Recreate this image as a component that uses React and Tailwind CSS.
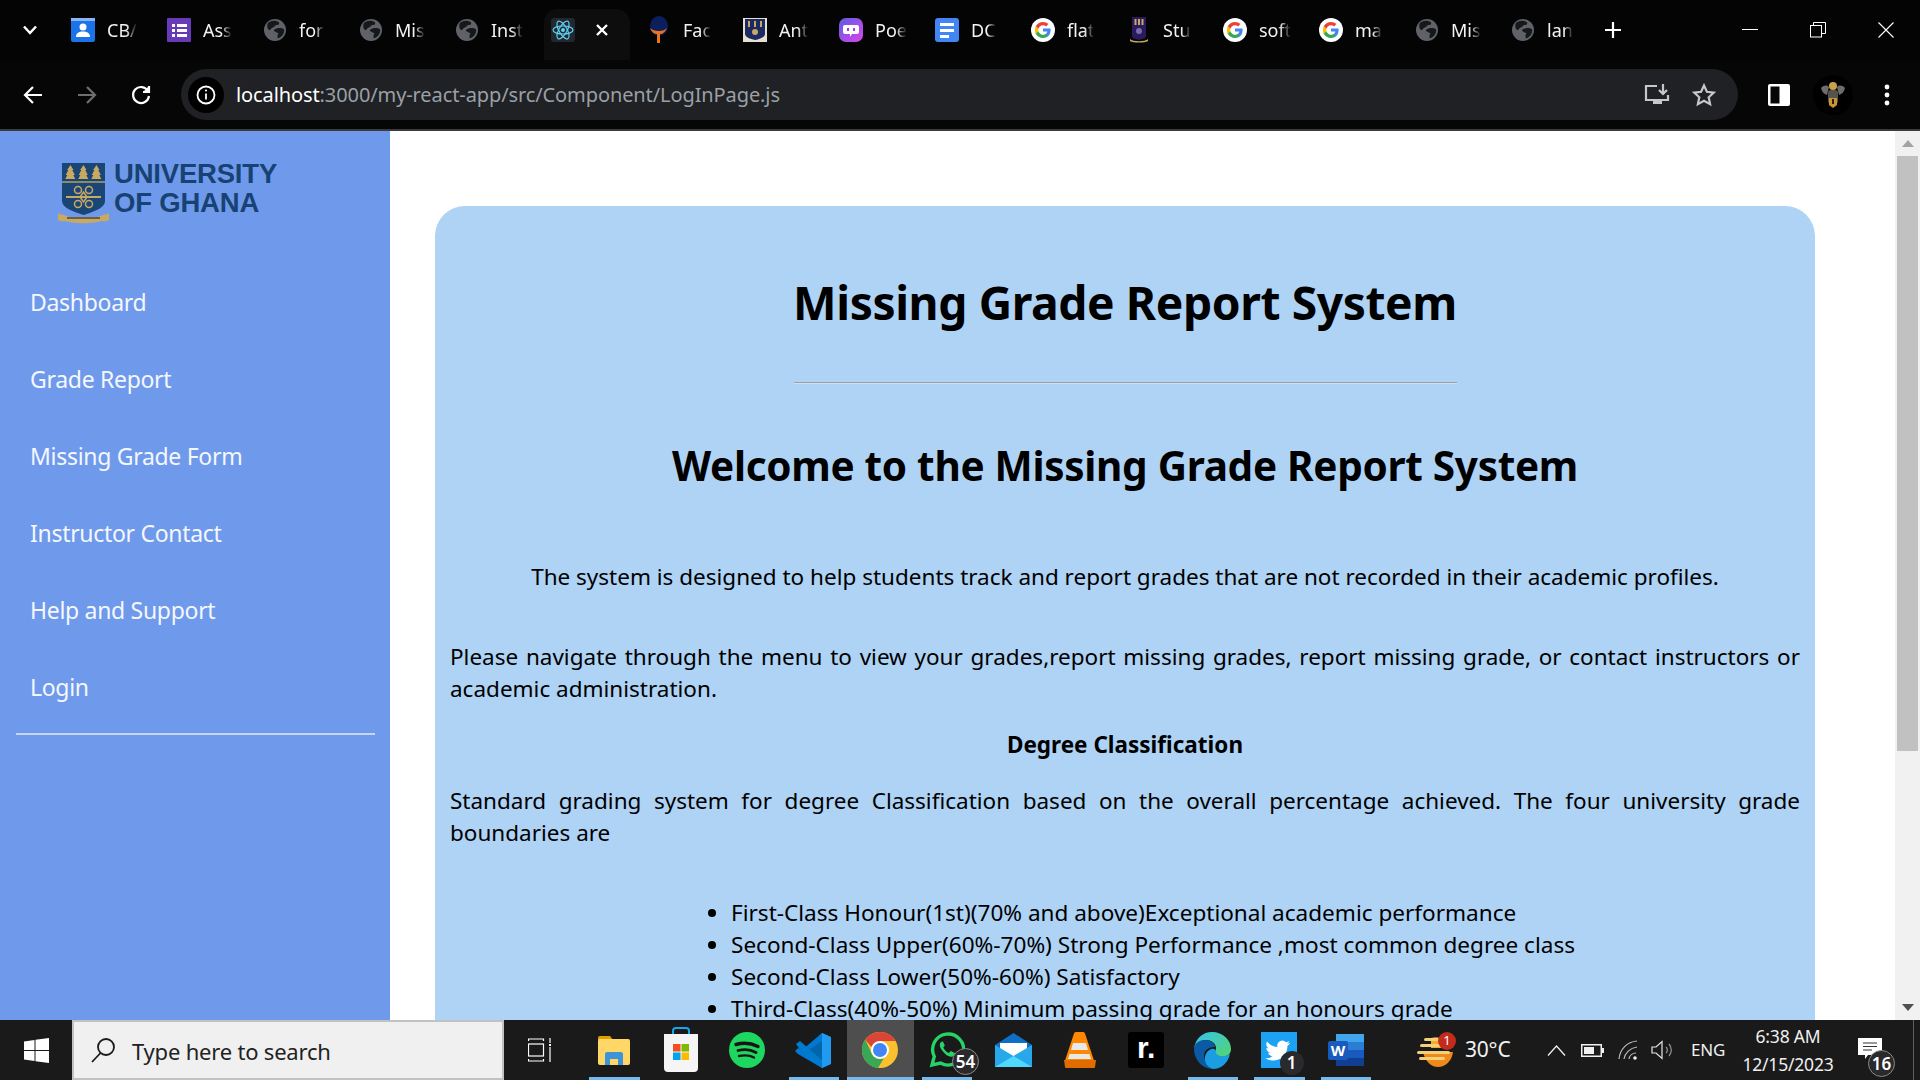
import React from "react";

const Globe = () => (
  <svg width="24" height="24" viewBox="0 0 24 24">
    <circle cx="12" cy="12" r="11" fill="#5f6368" />
    <path d="M4 6c3-3 8-4 11-2 1 2-1 3-3 3-1 3-4 3-5 6-2 0-4-3-3-7zM21 10c1 4-1 8-5 10-1-2-1-4 0-5-2-1-5-1-5-3 3-3 7-3 10-2z" fill="#17181a" transform="rotate(8 12 12)" />
  </svg>
);
const GIcon = () => (
  <svg width="24" height="24" viewBox="0 0 24 24">
    <circle cx="12" cy="12" r="12" fill="#fff" />
    <path d="M19.6 12.2c0-.6 0-1.1-.1-1.6H12v3h4.3c-.2 1-.8 1.9-1.6 2.4v2h2.6c1.5-1.4 2.3-3.4 2.3-5.8z" fill="#4285f4" />
    <path d="M12 20c2.2 0 4-.7 5.3-1.9l-2.6-2c-.7.5-1.6.8-2.7.8-2.1 0-3.9-1.4-4.5-3.3H4.8v2.1C6.1 18.300 8.800 20 12 20z" fill="#34a853" />
    <path d="M7.500 13.600c-.3-1-.3-2.200 0-3.200V8.300H4.800c-1.100 2.200-1.100 5.200 0 7.400z" fill="#fbbc05" />
    <path d="M12 7.200c1.200 0 2.300.4 3.100 1.200l2.300-2.300C16 4.800 14.200 4 12 4 8.800 4 6.100 5.700 4.800 8.300l2.700 2.100C8.100 8.600 9.900 7.200 12 7.200z" fill="#ea4335" />
  </svg>
);
const React1 = () => (
  <svg width="24" height="24" viewBox="0 0 24 24" fill="none" stroke="#5ed3f3" strokeWidth="1.200">
    <rect width="24" height="24" rx="3" fill="#23272f" stroke="none" />
    <circle cx="12" cy="12" r="2" fill="#5ed3f3" stroke="none" />
    <ellipse cx="12" cy="12" rx="10" ry="4" />
    <ellipse cx="12" cy="12" rx="10" ry="4" transform="rotate(60 12 12)" />
    <ellipse cx="12" cy="12" rx="10" ry="4" transform="rotate(120 12 12)" />
  </svg>
);
const Contact = () => (
  <svg width="24" height="24" viewBox="0 0 24 24">
    <rect x="0" y="0" width="24" height="24" rx="2" fill="#1a73e8" />
    <rect x="0" y="0" width="24" height="3" fill="#8ab4f8" />
    <circle cx="12" cy="9" r="3.500" fill="#fff" />
    <path d="M5 19c0-4 3-5.500 7-5.500s7 1.500 7 5.500z" fill="#fff" />
  </svg>
);
const Forms = () => (
  <svg width="24" height="24" viewBox="0 0 24 24">
    <rect width="24" height="24" fill="#673ab7" rx="1" />
    <g fill="#fff">
      <rect x="5" y="6" width="3" height="3" /><rect x="10" y="6" width="10" height="3" />
      <rect x="5" y="11" width="3" height="3" /><rect x="10" y="11" width="10" height="3" />
      <rect x="5" y="16" width="3" height="3" /><rect x="10" y="16" width="10" height="3" />
    </g>
  </svg>
);
const FaceIcon = () => (
  <svg width="24" height="28" viewBox="0 0 24 28">
    <ellipse cx="12" cy="10" rx="9" ry="10" fill="#0c1f5c" />
    <path d="M3 12c2 5 5 6 7 6v9h3v-9c3 0 5-2 7-6-2 2-4 3-8 3s-7-1-9-3z" fill="#e9761e" />
  </svg>
);
const Crest = () => (
  <svg width="24" height="24" viewBox="0 0 24 24">
    <rect width="24" height="24" fill="#e6e0d0" />
    <path d="M2 1h20v15c0 3-5 5-10 6-5-1-10-3-10-6z" fill="#1b2a63" />
    <g fill="#c9a862"><rect x="5" y="3" width="2" height="6" /><rect x="11" y="3" width="2" height="6" /><rect x="17" y="3" width="2" height="6" /></g>
    <circle cx="12" cy="14" r="3" fill="#c9a862" />
  </svg>
);
const Poe = () => (
  <svg width="24" height="24" viewBox="0 0 24 24">
    <defs>
      <linearGradient id="poeg" x1="0" y1="0" x2="1" y2="1"><stop offset="0" stopColor="#5d5cde" /><stop offset="1" stopColor="#d946ef" /></linearGradient>
    </defs>
    <rect width="24" height="24" rx="7" fill="url(#poeg)" />
    <path d="M6 7h12a2 2 0 0 1 2 2v5a2 2 0 0 1-2 2h-5l-2 3v-3H6a2 2 0 0 1-2-2V9a2 2 0 0 1 2-2z" fill="#fff" />
    <rect x="8" y="10" width="2" height="3" fill="#a13de0" /><rect x="14" y="10" width="2" height="3" fill="#a13de0" />
  </svg>
);
const Docs = () => (
  <svg width="24" height="24" viewBox="0 0 24 24">
    <rect width="24" height="24" rx="3" fill="#4285f4" />
    <g fill="#fff"><rect x="5" y="5" width="14" height="3" /><rect x="5" y="11" width="14" height="3" /><rect x="5" y="17" width="9" height="3" /></g>
  </svg>
);
const Stu = () => (
  <svg width="24" height="28" viewBox="0 0 24 28">
    <path d="M5 1h14v19c0 2-3 3-7 4-4-1-7-2-7-4z" fill="#2a1a5e" />
    <g fill="#c9a862"><rect x="7.500" y="3" width="2" height="6" /><rect x="11" y="3" width="2" height="6" /><rect x="14.500" y="3" width="2" height="6" /></g>
    <circle cx="12" cy="15" r="3" fill="#7a6aa8" />
    <path d="M3 23c3 3 15 3 18 0v2c-3 2-15 2-18 0z" fill="#c9a862" />
  </svg>
);

const tabs = [
  [<Contact />, "CB/"], [<Forms />, "Ass"], [<Globe />, "for"], [<Globe />, "Mis"], [<Globe />, "Inst"],
  null,
  [<FaceIcon />, "Fac"], [<Crest />, "Ant"], [<Poe />, "Poe"], [<Docs />, "DC"], [<GIcon />, "flat"], [<Stu />, "Stu"],
  [<GIcon />, "soft"], [<GIcon />, "ma"], [<Globe />, "Mis"], [<Globe />, "lan"],
];

function Tab({ icon, label }) {
  return (
    <div className="w-[96px] h-full flex items-center shrink-0">
      <div className="ml-[12px] w-6 h-7 flex items-center justify-center shrink-0">{icon}</div>
      <span className="ml-[12px] whitespace-nowrap text-[18px] text-[#f1f3f4] [mask-image:linear-gradient(to_right,black_65%,transparent)]">{label}</span>
    </div>
  );
}

function TabStrip() {
  return (
    <div className="h-[60px] bg-[#040404] flex items-stretch shrink-0">
      <div className="w-[59px] flex items-center justify-center shrink-0">
        <svg width="16" height="10" viewBox="0 0 16 10" fill="none" stroke="#fff" strokeWidth="2.500"><path d="M2 1.500 8 8l6-6.500" /></svg>
      </div>
      {tabs.map((t, i) =>
        t ? (
          <Tab key={i} icon={t[0]} label={t[1]} />
        ) : (
          <div key={i} className="w-[86px] mx-[5px] mt-[9px] pb-[9px] rounded-t-[14px] bg-[#0d0d0d] flex items-center shrink-0">
            <div className="ml-[7px] w-6 h-7 flex items-center justify-center shrink-0"><React1 /></div>
            <svg className="ml-[20px]" width="14" height="14" viewBox="0 0 14 14" stroke="#fff" strokeWidth="2.400"><path d="M2 2l10 10M12 2 2 12" /></svg>
          </div>
        )
      )}
      <div className="w-[36px] flex items-center justify-center shrink-0">
        <svg width="16" height="16" viewBox="0 0 16 16" stroke="#fff" strokeWidth="2.200"><path d="M8 0v16M0 8h16" /></svg>
      </div>
      <div className="ml-auto flex">
        <div className="w-[68px] flex items-center justify-center">
          <svg width="16" height="2" viewBox="0 0 16 2"><rect width="16" height="1" fill="#fff" /></svg>
        </div>
        <div className="w-[68px] flex items-center justify-center">
          <svg width="16" height="16" viewBox="0 0 16 16" fill="none" stroke="#fff"><rect x="0.500" y="3.500" width="11" height="11.500" /><path d="M3.500 3.500v-3h12v11h-4" /></svg>
        </div>
        <div className="w-[68px] flex items-center justify-center">
          <svg width="16" height="16" viewBox="0 0 16 16" stroke="#fff" strokeWidth="1.100"><path d="M.5.5l15 15M15.500.5l-15 15" /></svg>
        </div>
      </div>
    </div>
  );
}

function Toolbar() {
  return (
    <div className="h-[71px] pt-[9px] pb-[9px] bg-[#060606] border-b-2 border-[#3b3b3b] flex items-stretch shrink-0">
      <div className="w-[181px] flex items-center shrink-0">
        <svg className="ml-[23px]" width="20" height="20" viewBox="0 0 20 20" fill="none" stroke="#fff" strokeWidth="2.200"><path d="M19 10H2.500M10 2l-8 8 8 8" /></svg>
        <svg className="ml-[34px]" width="20" height="20" viewBox="0 0 20 20" fill="none" stroke="#6f6f6f" strokeWidth="2.200"><path d="M1 10h16.500M10 2l8 8-8 8" /></svg>
        <svg className="ml-[34px]" width="20" height="22" viewBox="0 0 20 22" fill="none" stroke="#fff" strokeWidth="2.200"><path d="M17 7a8 8 0 1 0 1 5" /><path d="M18 2v6h-6" fill="#fff" /></svg>
      </div>
      <div className="w-[1557px] bg-[#202124] rounded-full flex items-center shrink-0 pl-[7px]">
        <div className="w-[36px] h-[36px] rounded-full bg-black flex items-center justify-center shrink-0">
          <svg width="20" height="20" viewBox="0 0 20 20" fill="none" stroke="#fff" strokeWidth="1.800"><circle cx="10" cy="10" r="8.500" /><path d="M10 8.500v6" /><circle cx="10" cy="5.500" r="1.100" fill="#fff" stroke="none" /></svg>
        </div>
        <span className="ml-[12px] text-[20px] whitespace-nowrap text-[#9aa0a6] tracking-[-0.1px]"><span className="text-white">localhost</span>:3000/my-react-app/src/Component/LogInPage.js</span>
        <div className="ml-auto flex items-center mr-[22px]">
          <svg width="26" height="24" viewBox="0 0 26 24" fill="none" stroke="#c7c7c7" strokeWidth="2.200"><path d="M13 3H2v14h22v-5" /><path d="M19 1v9M15 7l4 4 4-4" /><rect x="9" y="18" width="9" height="3" fill="#c7c7c7" stroke="none" /></svg>
          <svg className="ml-[22px]" width="24" height="24" viewBox="0 0 24 24" fill="none" stroke="#c7c7c7" strokeWidth="2.200"><path d="M12 2.500l2.900 6.300 6.900.8-5.100 4.700 1.400 6.800-6.100-3.400-6.100 3.400 1.400-6.800-5.100-4.700 6.900-.8z" /></svg>
        </div>
      </div>
      <div className="flex-1 flex items-center">
        <svg className="ml-[30px]" width="22" height="22" viewBox="0 0 22 22"><rect width="22" height="22" rx="2" fill="#fff" /><rect x="2.500" y="2.500" width="9" height="17" fill="#060606" /></svg>
        <div className="ml-[23px] w-[40px] h-[40px] flex items-center justify-center rounded-full bg-black">
          <svg width="26" height="28" viewBox="0 0 26 28">
            <path d="M1 7c3-3 6-3 8-1l-2 8C4 13 2 11 1 7zM25 7c-3-3-6-3-8-1l2 8c3-1 5-3 6-7z" fill="#6d6d6d" />
            <circle cx="13" cy="5" r="4" fill="#c9a24a" />
            <rect x="8" y="9" width="10" height="14" rx="3" fill="#55534d" />
            <path d="M9 17h8v7l-4 3-4-3z" fill="#c9952e" />
            <rect x="12" y="18" width="2" height="5" fill="#222" />
          </svg>
        </div>
        <svg className="ml-[31px]" width="6" height="22" viewBox="0 0 6 22" fill="#fff"><circle cx="3" cy="3" r="2.400" /><circle cx="3" cy="11" r="2.400" /><circle cx="3" cy="19" r="2.400" /></svg>
      </div>
    </div>
  );
}

function Sidebar() {
  const items = ["Dashboard", "Grade Report", "Missing Grade Form", "Instructor Contact", "Help and Support", "Login"];
  return (
    <aside className="w-[390px] bg-[#6f9aeb] shrink-0 flex flex-col font-['Noto_Sans',sans-serif]">
      <div className="flex pl-[57px] pt-[32px] h-[152px]">
        <svg width="53" height="62" viewBox="0 0 53 62" className="shrink-0">
          <path d="M5 0h43v38c0 7-12 11-21.500 14C17 49 5 45 5 38z" fill="#1a4676" />
          <rect x="5" y="18" width="43" height="2" fill="#8a8a6a" />
          <g fill="#c9a862">
            <path d="M13.500 2l3 5-1.200 0 2.500 5-1.500 0 2 4h-10l2-4-1.500 0 2.500-5-1.200 0z" />
            <path d="M26.500 2l3 5-1.200 0 2.500 5-1.500 0 2 4h-10l2-4-1.500 0 2.500-5-1.200 0z" />
            <path d="M39.500 2l3 5-1.200 0 2.500 5-1.500 0 2 4h-10l2-4-1.500 0 2.500-5-1.200 0z" />
            <rect x="9" y="33" width="35" height="2" />
          </g>
          <g fill="none" stroke="#c9a862" strokeWidth="1.500">
            <circle cx="21" cy="27" r="3.500" /><circle cx="32" cy="27" r="3.500" />
            <circle cx="21" cy="41" r="3.500" /><circle cx="32" cy="41" r="3.500" />
            <path d="M26.500 29l3.500 5-3.500 5-3.500-5z" />
          </g>
          <path d="M1 50c2 2 4 1 6 2 12 5 27 5 39 0 2-1 4 0 6-2v7c-3 2-5 1-7 1-12 3-25 3-37 0-2 0-4 1-7-1z" fill="#c9a862" />
          <rect x="10" y="54" width="33" height="2" fill="#6d5f3f" />
        </svg>
        <div className="ml-[4px] text-[#184273] font-bold text-[27.5px] leading-[29px] font-['Liberation_Sans',sans-serif] -mt-[4px] tracking-[-0.2px]">
          <div>UNIVERSITY</div>
          <div>OF GHANA</div>
        </div>
      </div>
      <nav className="flex flex-col pl-[30px]">
        {items.map((t) => (
          <div key={t} className="h-[77px] leading-[36px] pt-[1px] text-[23px] text-[#f4f7fd] tracking-[-0.3px]">{t}</div>
        ))}
      </nav>
      <div className="ml-[16px] mr-[15px] -mt-[12px] h-[2px] bg-[#c5d6f5]" />
    </aside>
  );
}

function Content() {
  return (
    <main className="flex-1 min-w-0 overflow-hidden pl-[45px] pr-[80px] pt-[75px] bg-white font-['Noto_Sans',sans-serif] text-black">
      <div className="bg-[#aed3f5] rounded-[30px] px-[15px] pt-[65px] pb-10">
        <h1 className="text-center font-bold text-[46.200px] leading-[64px] tracking-[-0.4px]">Missing Grade Report System</h1>
        <div className="w-[663px] mx-auto mt-[47px] h-[2px] border-t border-[#9aa0a8] border-b border-b-[#cfe0f2]" />
        <h2 className="text-center font-bold text-[40.500px] leading-[48px] mt-[58px] tracking-[-0.3px]">Welcome to the Missing Grade Report System</h2>
        <p className="text-center text-[22.5px] leading-[32px] mt-[71px]">The system is designed to help students track and report grades that are not recorded in their academic profiles.</p>
        <p className="text-justify text-[22.5px] leading-[32px] mt-[48px]">Please navigate through the menu to view your grades,report missing grades, report missing grade, or contact instructors or academic administration.</p>
        <p className="text-center font-bold text-[22.5px] leading-[32px] mt-[24px]">Degree Classification</p>
        <p className="text-justify text-[22.5px] leading-[32px] mt-[24px]">Standard grading system for degree Classification based on the overall percentage achieved. The four university grade boundaries are</p>
        <ul className="list-disc ml-[281px] mt-[48px] text-[22.55px] leading-[32px]">
          <li>First-Class Honour(1st)(70% and above)Exceptional academic performance</li>
          <li>Second-Class Upper(60%-70%) Strong Performance ,most common degree class</li>
          <li>Second-Class Lower(50%-60%) Satisfactory</li>
          <li>Third-Class(40%-50%) Minimum passing grade for an honours grade</li>
        </ul>
      </div>
    </main>
  );
}

function Scrollbar() {
  return (
    <div className="w-[25px] bg-[#f1f1f1] shrink-0 flex flex-col items-center">
      <div className="h-[25px] flex items-center justify-center w-full">
        <svg width="12" height="7" viewBox="0 0 12 7"><path d="M6 0l6 7H0z" fill="#a3a3a3" /></svg>
      </div>
      <div className="w-[21px] h-[595px] bg-[#c1c1c1]" />
      <div className="mt-auto h-[25px] flex items-center justify-center w-full">
        <svg width="12" height="7" viewBox="0 0 12 7"><path d="M6 7 12 0H0z" fill="#505050" /></svg>
      </div>
    </div>
  );
}

const Explorer = () => (
  <svg width="34" height="30" viewBox="0 0 34 30">
    <path d="M1 3a2 2 0 0 1 2-2h10l3 4h-15z" fill="#e0a000" />
    <rect x="1" y="4" width="32" height="26" rx="2" fill="#ffd766" />
    <path d="M8 30V19a2 2 0 0 1 2-2h14a2 2 0 0 1 2 2v11h-5v-6h-8v6z" fill="#3f93d8" />
  </svg>
);
const Store = () => (
  <svg width="36" height="46" viewBox="0 0 36 46">
    <path d="M10 10V4a3 3 0 0 1 3-3h10a3 3 0 0 1 3 3v6" fill="none" stroke="#1aa4ea" strokeWidth="2" />
    <path d="M1 7h34v34a4 4 0 0 1-4 4H5a4 4 0 0 1-4-4z" fill="#f5f5f5" />
    <rect x="10" y="17" width="7.500" height="7.500" fill="#f25022" /><rect x="18.500" y="17" width="7.500" height="7.500" fill="#7fba00" />
    <rect x="10" y="25.500" width="7.500" height="7.500" fill="#00a4ef" /><rect x="18.500" y="25.500" width="7.500" height="7.500" fill="#ffb900" />
  </svg>
);
const Spotify = () => (
  <svg width="36" height="36" viewBox="0 0 36 36">
    <circle cx="18" cy="18" r="18" fill="#1ed760" />
    <g fill="none" stroke="#191414" strokeLinecap="round"><path d="M7 12.500c7-2 15-1.500 22 2" strokeWidth="3.400" /><path d="M9 18.500c6-1.500 13-1 18 2" strokeWidth="2.800" /><path d="M10 24c5-1 11-.800 15 1.600" strokeWidth="2.300" /></g>
  </svg>
);
const VSCode = () => (
  <svg width="37" height="37" viewBox="0 0 37 37">
    <path d="M27 1 11 18l16 18 9-4V5z" fill="#0065a9" />
    <path d="M27 1v35l9-4V5z" fill="#1f9cf0" />
    <path d="M27 9 13 18.500 27 28v8L3 22l-3-3 3-3 4 2L27 1z" fill="#0078d4" />
    <path d="M1 12l4-3 22 19v8L8 22z" fill="#007acc" />
  </svg>
);
const Chrome = () => (
  <svg width="36" height="36" viewBox="0 0 36 36">
    <circle cx="18" cy="18" r="18" fill="#fbc02d" />
    <path d="M18 0a18 18 0 0 1 15.600 9H18a9 9 0 0 0-8.500 6L3.200 7.700A18 18 0 0 1 18 0z" fill="#db4437" />
    <path d="M3.200 7.700 10.500 23A9 9 0 0 0 22 26l-6 10A18 18 0 0 1 3.200 7.700z" fill="#3aa757" />
    <circle cx="18" cy="18" r="9" fill="#fff" /><circle cx="18" cy="18" r="7" fill="#4285f4" />
  </svg>
);
const WhatsApp = () => (
  <svg width="36" height="36" viewBox="0 0 36 36">
    <path d="M3 33l2.300-8.500A15.500 15.500 0 1 1 11.500 31z" fill="none" stroke="#25d366" strokeWidth="3.400" />
    <path d="M12 10c-2 2-1.500 5 1.500 9s7 6.500 10 5.500c2-.8 2.500-2.500 2.300-3.500l-4-2-2 2c-2-.8-4.500-3-5.500-5.500l1.500-2-1.800-4z" fill="#25d366" />
  </svg>
);
const Mail = () => (
  <svg width="37" height="34" viewBox="0 0 37 34">
    <path d="M18.500 0 37 12v22H0V12z" fill="#0f6fc6" />
    <path d="M5 10h27v9l-13.500 6L5 19z" fill="#fff" />
    <path d="M0 12l18.500 11L37 12v22H0z" fill="#28a8ea" />
    <path d="M0 34 18.500 23 37 34z" fill="#50d9ff" />
  </svg>
);
const VLC = () => (
  <svg width="32" height="36" viewBox="0 0 32 36">
    <path d="M12 0h7a2 2 0 0 1 2 1.500l9 27H1l9-27A2 2 0 0 1 12 0z" fill="#ff8800" />
    <path d="M9 11h13l2 7H7zM5.500 22h20l1.500 5H4z" fill="#e8e8e8" />
    <path d="M0 28h32l-1 7a1 1 0 0 1-1 1H2a1 1 0 0 1-1-1z" fill="#e06c00" />
  </svg>
);
const Edge = () => (
  <svg width="37" height="37" viewBox="0 0 37 37">
    <defs><linearGradient id="edgeg" x1="0" y1="0" x2="1" y2="1"><stop offset="0" stopColor="#35c1f1" /><stop offset="1" stopColor="#55d66b" /></linearGradient></defs>
    <path d="M18 0c11 0 19 8 19 17 0 6-5 8-10 8-4 0-7-2-7-4 0-1 2-2 2-5 0-5-5-8-10-8-5 0-9 3-12 8C2 6 9 0 18 0z" fill="url(#edgeg)" />
    <path d="M0 17c0-6 6-9 11-9 6 0 10 3 10 7-6 0-11 3-11 9 0 6 5 12 11 13-12 1-21-9-21-20z" fill="#0c59a4" />
    <path d="M22 21c2 4 9 4 14 1-2 9-9 15-17 15-6-2-9-7-8-12 1-5 5-9 9-8 1 0 2 2 2 4z" fill="#1b9de2" />
  </svg>
);
const Twitter = () => (
  <svg width="36" height="36" viewBox="0 0 36 36">
    <rect width="36" height="36" fill="#1da1f2" />
    <path d="M29 11c-1 .5-2 .7-3 .8 1-.7 1.900-1.700 2.300-2.900-1 .6-2 1-3.300 1.300A5 5 0 0 0 16.500 15c-4-.2-8-2.200-10.500-5.400-1.300 2.300-.7 5.200 1.600 6.700-.8 0-1.600-.2-2.300-.6 0 2.400 1.700 4.500 4 5-.7.2-1.500.2-2.300.1.700 2 2.600 3.400 4.700 3.500a10.500 10.500 0 0 1-7.300 2c9.500 6 22.500-.5 22-12.500 1-.7 1.900-1.500 2.600-2.300z" fill="#fff" />
  </svg>
);
const Word = () => (
  <svg width="36" height="32" viewBox="0 0 36 32">
    <rect x="8" y="0" width="28" height="32" rx="2" fill="#2b7cd3" />
    <rect x="8" y="0" width="28" height="8" fill="#41a5ee" />
    <rect x="8" y="16" width="28" height="8" fill="#185abd" />
    <rect x="8" y="24" width="28" height="8" fill="#103f91" />
    <rect x="0" y="7" width="20" height="19" rx="2" fill="#185abd" />
    <text x="10" y="22" textAnchor="middle" fontSize="15" fontWeight="700" fill="#fff" fontFamily="Noto Sans, sans-serif">W</text>
  </svg>
);

const Badge = ({ children, cls }) => (
  <span className={"absolute flex items-center justify-center rounded-full bg-[#2a2a2c] border border-[#8a8a8a] text-white text-[17px] font-semibold " + cls}>{children}</span>
);

function Cell({ children, active, under }) {
  return (
    <div className={"w-[66.5px] h-full relative flex items-center justify-center shrink-0 " + (active ? "bg-[#4e4e4e]" : "")}>
      {children}
      {under && <div className={"absolute bottom-0 h-[3px] bg-[#76b9ed] " + (active ? "inset-x-0" : "inset-x-[8px]")} />}
    </div>
  );
}

function Taskbar() {
  return (
    <div className="h-[60px] bg-[#1a1a1a] flex items-stretch shrink-0 relative font-['Noto_Sans',sans-serif]">
      <div className="w-[72px] flex items-center justify-center shrink-0">
        <svg width="25" height="25" viewBox="0 0 25 25" fill="#fff"><path d="M0 3.500 10.500 2v10H0zM11.500 1.800 25 0v12H11.500zM0 13h10.500v10L0 21.500zM11.500 13H25v12l-13.500-1.800z" /></svg>
      </div>
      <div className="w-[432px] bg-[#f0f0f0] border-2 border-[#c2c2c2] flex items-center shrink-0">
        <svg className="ml-[16px]" width="26" height="26" viewBox="0 0 26 26" fill="none" stroke="#1a1a1a" strokeWidth="1.800"><circle cx="16" cy="10" r="8" /><path d="M10.500 16 2 25" /></svg>
        <span className="ml-[16px] mt-[3px] text-[22px] text-[#222] tracking-[-0.2px]">Type here to search</span>
      </div>
      <div className="w-[77px] flex items-center pl-[24px] shrink-0">
        <svg width="24" height="24" viewBox="0 0 24 24" fill="none" stroke="#fff" strokeWidth="1.200"><rect x="0.500" y="6" width="15" height="12" /><path d="M.5 3V1h15v2M.5 21v2h15v-2M22 0v5M22 9v15" /><rect x="21" y="6" width="2" height="2" fill="#fff" stroke="none" /></svg>
      </div>
      <Cell under><Explorer /></Cell>
      <Cell><Store /></Cell>
      <Cell><Spotify /></Cell>
      <Cell under><VSCode /></Cell>
      <Cell active under><Chrome /></Cell>
      <Cell under><WhatsApp /><Badge cls="w-[27px] h-[27px] right-[1px] bottom-[5px]">54</Badge></Cell>
      <Cell><Mail /></Cell>
      <Cell><VLC /></Cell>
      <Cell>
        <div className="w-[36px] h-[36px] rounded-[3px] bg-black flex items-center justify-center text-white font-bold text-[30px] leading-none font-['Liberation_Sans',sans-serif] pb-[4px]">r.</div>
      </Cell>
      <Cell under><Edge /></Cell>
      <Cell under><Twitter /><Badge cls="w-[24px] h-[24px] right-[9px] bottom-[5px] border-transparent">1</Badge></Cell>
      <Cell under><Word /></Cell>

      <div className="ml-[36px] w-[40px] relative flex items-center justify-center shrink-0">
        <svg width="36" height="36" viewBox="0 0 36 36">
          <path d="M6 20h30c-1 9-8 15-15 15S8 29 6 20z" fill="#ee8a1a" />
          <path d="M14 6a16 16 0 0 1 20 10H14z" fill="#f6a92a" />
          <g fill="#f3cf7a"><rect x="7" y="6" width="17" height="3" rx="1.500" /><rect x="3" y="12" width="22" height="3" rx="1.500" /><rect x="0" y="19" width="33" height="3" rx="1.500" /><rect x="2" y="25" width="26" height="3" rx="1.500" /></g>
        </svg>
        <span className="absolute top-[12px] right-[-1px] w-[18px] h-[18px] rounded-full bg-[#c42b1c] text-white text-[13px] flex items-center justify-center">1</span>
      </div>
      <div className="w-[70px] pl-[10px] flex items-center text-[21px] text-[#f0f0f0] shrink-0 tracking-[-0.2px]">30°C</div>
      <div className="ml-[13px] w-[36px] flex items-center justify-center shrink-0">
        <svg width="19" height="11" viewBox="0 0 19 11" fill="none" stroke="#f0f0f0" strokeWidth="1.300"><path d="M1 10.500 9.500 1 18 10.500" /></svg>
      </div>
      <div className="w-[36px] flex items-center justify-center shrink-0">
        <svg width="23" height="13" viewBox="0 0 23 13"><rect x=".75" y=".75" width="19.500" height="11.500" fill="none" stroke="#f0f0f0" strokeWidth="1.500" /><rect x="3" y="3" width="10" height="7" fill="#f0f0f0" /><rect x="21" y="4" width="2" height="5" fill="#f0f0f0" /></svg>
      </div>
      <div className="w-[36px] flex items-center justify-center shrink-0">
        <svg width="20" height="20" viewBox="0 0 20 20" fill="none" stroke="#bbb" strokeWidth="1.200"><path d="M1 19C2 9 9 2 19 1M6 19c1-6 6-11 13-12M11 19c.5-3 3-6 7-6" /><circle cx="17" cy="18" r="1.800" fill="#f0f0f0" stroke="none" /></svg>
      </div>
      <div className="w-[34px] flex items-center justify-center shrink-0">
        <svg width="24" height="20" viewBox="0 0 24 20" fill="none" stroke="#e8e8e8" strokeWidth="1.200"><path d="M1 7h4l6-5.500v17L5 13H1z" /><path d="M15 7a4 4 0 0 1 0 6M18 4a9 9 0 0 1 0 12" stroke="#999" /></svg>
      </div>
      <div className="w-[56px] flex items-center justify-center text-[17px] text-[#f0f0f0] shrink-0 tracking-[-0.2px]">ENG</div>
      <div className="w-[104px] flex flex-col items-center justify-center text-[17.500px] leading-[28px] text-[#f0f0f0] shrink-0 tracking-[-0.2px]">
        <div>6:38 AM</div>
        <div>12/15/2023</div>
      </div>
      <div className="w-[60px] relative flex items-center justify-center shrink-0">
        <svg width="24" height="26" viewBox="0 0 24 26"><path d="M0 1h24v17h-14l-3 4v-4H0z" fill="#fff" /><path d="M5 6h14M5 9.500h14M5 13h9" stroke="#333" strokeWidth="1.200" /></svg>
        <Badge cls="w-[27px] h-[27px] right-[5px] bottom-[3px]">16</Badge>
      </div>
      <div className="w-[20px] flex justify-end shrink-0"><div className="w-px h-full bg-[#5f5f5f] mr-[6px]" /></div>
    </div>
  );
}

export default function App() {
  return (
    <div className="w-[1920px] h-[1080px] flex flex-col overflow-hidden font-['Noto_Sans',sans-serif]">
      <TabStrip />
      <Toolbar />
      <div className="flex-1 min-h-0 flex">
        <Sidebar />
        <Content />
        <Scrollbar />
      </div>
      <Taskbar />
    </div>
  );
}
